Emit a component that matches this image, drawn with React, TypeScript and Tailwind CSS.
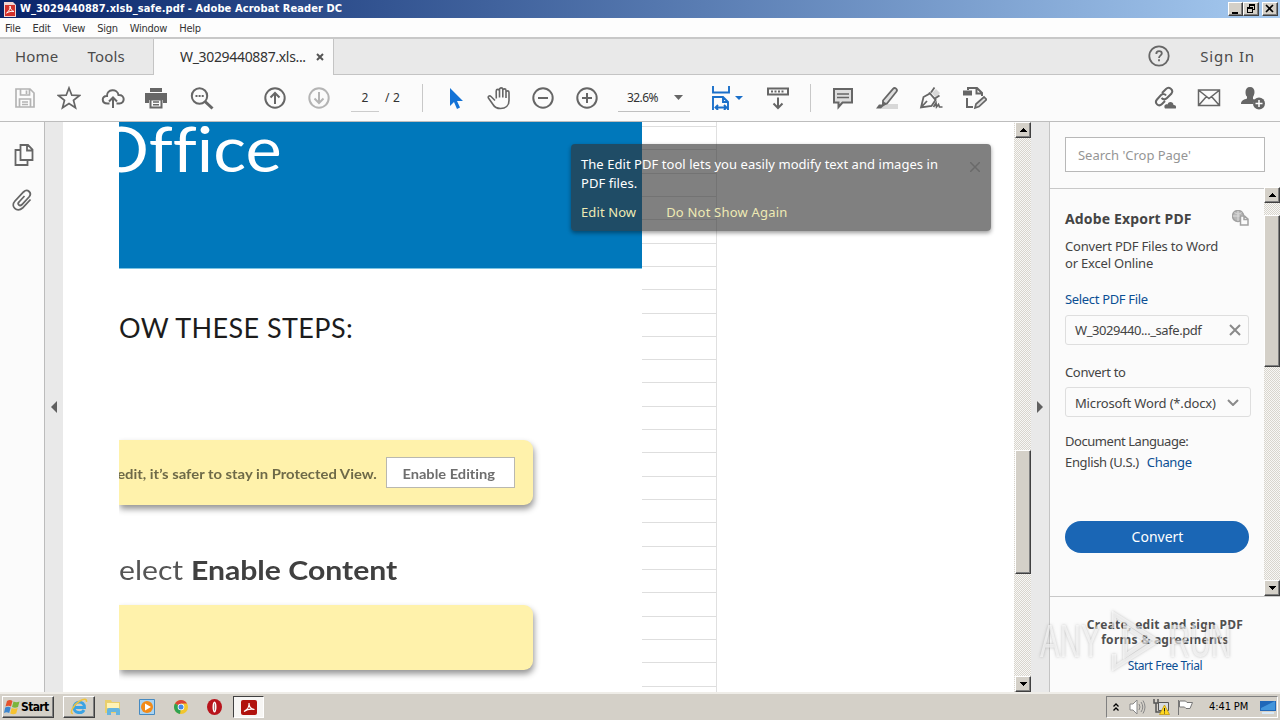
import React from 'react';

const Icon = ({ children, size = 24, className = '' }: { children: React.ReactNode; size?: number; className?: string }) => (
    <svg width={size} height={size} viewBox="0 0 24 24" fill="none" stroke="currentColor" strokeWidth="2" className={`shrink-0 ${className}`}>
        {children}
    </svg>
);

const Tool = ({ children, className = 'text-[#666]' }: { children: React.ReactNode; className?: string }) => (
    <button className={`flex h-11 w-11 shrink-0 items-center justify-center ${className}`}>
        <Icon>{children}</Icon>
    </button>
);

const bevel = 'bg-[#d4d0c8] border border-t-white border-l-white border-r-[#404040] border-b-[#404040] shadow-[inset_-1px_-1px_0_#808080]';

const ScrollButton = ({ up = false }: { up?: boolean }) => (
    <div className={`flex h-4 w-4 shrink-0 items-center justify-center ${bevel}`}>
        <svg width="7" height="4" viewBox="0 0 7 4" shapeRendering="crispEdges">
            <path d={up ? 'M3 0h1v1h1v1h1v1h1v1H0V3h1V2h1V1h1z' : 'M0 0h7v1H6v1H5v1H4v1H3V3H2V2H1V1H0z'} fill="#000" />
        </svg>
    </div>
);

const track = 'bg-[#e9e7e3] bg-[repeating-conic-gradient(#d8d5cd_0_25%,#f8f7f5_0_50%)] bg-[length:2px_2px]';

const TitleBar = () => (
    <header className="flex h-[18px] items-center bg-linear-to-r from-[#0a246a] to-[#a6caf0] pl-1 pr-[2px]">
        <svg width="12" height="15" viewBox="0 0 12 15" className="mr-[4px]">
            <path d="M0 0h9l3 3v12H0z" fill="#f3d5d3" />
            <path d="M1 3h10v11H1z" fill="#d3322b" />
            <path d="M2.500 11c3-2 4-5 3.500-7 0 3 2 5 4 5.500-3-.500-5 .2-7.500 1.500z" stroke="#fff" fill="none" />
        </svg>
        <span className="pt-px font-['DejaVu_Sans_Condensed','DejaVu_Sans',sans-serif] text-[11px] font-bold tracking-[0.09px] text-white">
            W_3029440887.xlsb_safe.pdf - Adobe Acrobat Reader DC
        </span>
        <div className="ml-auto flex">
            <div className={`h-[14px] w-[15px] ${bevel}`}>
                <svg width="13" height="12" shapeRendering="crispEdges"><path d="M3 9h6v2H3z" /></svg>
            </div>
            <div className={`mr-[3px] h-[14px] w-4 ${bevel}`}>
                <svg width="13" height="12" shapeRendering="crispEdges" fill="none" stroke="#000"><path d="M5.500 1.500h5v5h-5zM5 2.500h6" /><path d="M3.500 4.500h5v5h-5z" fill="#d4d0c8" /><path d="M3 5.500h6" /></svg>
            </div>
            <div className={`h-[14px] w-4 ${bevel}`}>
                <svg width="13" height="12" fill="none" stroke="#000" strokeWidth="1.600"><path d="M3 2l7 7M10 2L3 9" /></svg>
            </div>
        </div>
    </header>
);

const MenuBar = () => (
    <nav className="flex h-[19px] items-center gap-[12px] bg-[#fdfdfd] pl-[5px] pt-[3px] font-['DejaVu_Sans_Condensed','DejaVu_Sans',sans-serif] text-[11px] tracking-[-0.25px] text-[#333]">
        {['File', 'Edit', 'View', 'Sign', 'Window', 'Help'].map((m) => (
            <span key={m}>{m}</span>
        ))}
    </nav>
);

const TabBar = () => (
    <div className="flex h-[38px] border-t-2 border-[#c8c8c8] bg-[#e9e9e9] text-[15px] text-[#4b4b4b]">
        <div className="flex w-[154px] items-center gap-[29px] border-r border-b border-[#c4c4c4] pl-[15px]">
            <span className="tracking-[0.2px]">Home</span>
            <span className="tracking-[0.2px]">Tools</span>
        </div>
        <div className="flex w-[180px] items-center border-r border-[#c4c4c4] bg-[#fbfbfb] pl-[26px] text-[14px] text-[#333]">
            <span className="w-[127px] pb-0.5 tracking-[-0.33px] whitespace-nowrap">W_3029440887.xls...</span>
            <svg width="8" height="8" viewBox="0 0 8 8" className="ml-[9px]" stroke="#555" strokeWidth="2"><path d="M1 1l6 6M7 1L1 7" /></svg>
        </div>
        <div className="flex flex-1 items-center justify-end border-b border-[#c4c4c4] pr-[25px] pb-px">
            <svg width="22" height="22" viewBox="0 0 22 22" fill="none" stroke="#666" strokeWidth="1.800" className="mr-[30px]">
                <circle cx="11" cy="11" r="9.700" />
                <path d="M8.300 9c0-4 5.500-3.500 5.500-.5C13.800 10.300 11 10.500 11 13M11 14.200v2" />
            </svg>
            <span className="tracking-[0.85px]">Sign In</span>
        </div>
    </div>
);

const ToolBar = () => (
    <div className="flex h-[47px] items-center border-b border-[#bdbdbd] bg-[#fbfbfb] pl-[3px] text-[12px] text-[#333]">
        <Tool className="text-[#b4b4b4]">
            <path d="M3 3h14l4 4v14H3zM7.500 3v6h9V3M13.500 4.500V8M6.500 21v-8h11v8M9 16h6M9 18.500h6" strokeWidth="1.700" />
        </Tool>
        <Tool><path d="M12 2l2.800 7.200 7.700.3-6 4.800 2 7.500L12 17.500 5.500 21.800l2-7.500-6-4.800 7.700-.3z" strokeWidth="1.700" /></Tool>
        <Tool><path d="M8.500 17.500H6.500C0 17.500 .5 9.500 6 10c-.5-7 10.500-8 11.500-1 7-.5 6.500 8.500 1 8.500H15.500M12 22V11.500M8 15.500l4-4 4 4" /></Tool>
        <button className="-ml-px mr-0.5 flex h-11 w-11 items-center justify-center text-[#666]">
            <Icon>
                <path d="M6 2h12v4H6zM1 7h22v10h-4v-3H5v3H1z" fill="currentColor" stroke="none" />
                <path d="M6.500 13.500h11v8h-11z" fill="#fbfbfb" />
                <path d="M9 16h6M9 18.800h6" strokeWidth="1.400" />
            </Icon>
        </button>
        <Tool>
            <circle cx="9.500" cy="10" r="7.700" /><path d="M15 15.500l7.500 7" strokeWidth="3" /><path d="M5.500 10h2M8.600 10h2M11.700 10h2" />
        </Tool>
        <div className="ml-[29px] flex">
            <Tool><circle cx="12" cy="12" r="9.700" /><path d="M12 18V7M7.500 11.500L12 7l4.500 4.500" /></Tool>
            <Tool className="text-[#b4b4b4]"><circle cx="12" cy="12" r="9.700" /><path d="M12 6v11M7.500 12.500L12 17l4.500-4.500" /></Tool>
        </div>
        <div className="ml-[10px] flex h-[27px] w-7 items-center justify-center border-b border-[#ccc]">2</div>
        <span className="ml-[6px] w-[18px] tracking-[0.2px] whitespace-nowrap">/ 2</span>
        <div className="ml-[19px] mr-[10px] h-7 w-px bg-[#c8c8c8]" />
        <Tool className="text-[#1473d6]"><path d="M7 2v18l4-4 3 7 3-1.400-3-6.600h6z" fill="currentColor" stroke="none" /></Tool>
        <Tool>
            <path d="M8 14.500L4 10.500c-1.500-1.500-3.500 0-2.400 1.700L6 18.500c2 3.500 4 4 7.500 4 5 0 8.500-3 8.500-8V6.500c0-2.200-3-2.200-3 0V12M19 8V4.500c0-2.200-3.200-2.200-3.200 0V11.500M15.800 5V3.500c0-2.200-3.300-2.200-3.300 0V11.500M12.500 5c0-2.200-3.300-2.200-3.300 0L9.300 12.500" strokeWidth="1.600" />
        </Tool>
        <Tool><circle cx="12" cy="12" r="9.700" /><path d="M7 12h10" /></Tool>
        <Tool><circle cx="12" cy="12" r="9.700" /><path d="M7 12h10M12 7v10" /></Tool>
        <div className="ml-[9px] flex h-[27px] w-[72px] items-center justify-between border-b border-[#c0c0c0] pl-[9px] pr-[7px]">
            <span className="tracking-[-0.6px]">32.6%</span>
            <svg width="9" height="5"><path d="M0 0h9L4.500 5z" fill="#666" /></svg>
        </div>
        <button className="ml-[20px] flex items-center text-[#1a6fc9]">
            <Icon size={24}>
                <path d="M3 0v6.500h16V0M3 24V11h10l5 5v8M13 11v5h5M5.500 21.500h11M8 19l-2.500 2.500L8 24M14 19l2.500 2.500L14 24" strokeWidth="1.900" />
            </Icon>
            <svg width="8" height="4" className="ml-px"><path d="M0 0h8L4 4z" fill="#1a6fc9" /></svg>
        </button>
        <button className="ml-[23px] text-[#666]">
            <Icon><path d="M2 2.500h20v6H2zM12 11.500v10M7.500 17.500l4.500 4.500 4.500-4.500" /><path d="M5 5.500h14" strokeDasharray="2 1.500" /></Icon>
        </button>
        <div className="ml-[20px] mr-[10px] h-7 w-px bg-[#c8c8c8]" />
        <Tool><path d="M3 3h18v13.500h-9.500L7.500 21v-4.500H3z" fill="#dedede" /><path d="M6 8h12M6 11.500h12" strokeWidth="1.300" /></Tool>
        <Tool>
            <path d="M8 18h15v5H6z" fill="#d8d8d8" stroke="none" />
            <path d="M8 14.500L18 2.800c2-2 5 .7 3.500 2.700L12 17.500l-4 .8z" fill="#dedede" strokeWidth="1.800" />
            <path d="M1 22.500l3-4h3l1-3.500 4 3-4 2.500-2 2z" fill="currentColor" stroke="none" />
        </Tool>
        <Tool>
            <path d="M13 7l4-4 4 4-4 5z" fill="#d8d8d8" stroke="none" />
            <path d="M2 21.500l2.500-10.500L11 7.500l5.500 6.500L12.500 20zM2 21.500l6-6.500M10 6.500l7 7.500M12 6.500l3.500-5M16 12.500l4.500-3" strokeWidth="1.800" />
            <path d="M14.500 21l2.500-4 .5 4 2-2.500 1 2.500h3" strokeWidth="1.700" />
        </Tool>
        <Tool>
            <path d="M0 4.500h9v5H0z" fill="currentColor" stroke="none" />
            <path d="M5 4V2h9l5 5v3M13.500 2.500v5H19M4 12v9h6" />
            <path d="M12 22l1-4 8-7 2.500 2.500-7.500 7z" fill="#dedede" strokeWidth="1.700" />
        </Tool>
        <div className="ml-auto mr-[5px] flex">
            <Tool>
                <path d="M9 7l4-4c3-3 8 1 5.500 4.500L14 12c-2 2-4 1.500-5.500 0M12 15l-3 3c-3.500 3.500-8-1-5-4.500L8 9c2-1.500 4-1 5 .5" />
                <path d="M12 22.500c-2-3.500 1.500-5 2.500-4 1-4 6-3 6 .5 3-.5 3 3.500 2 3.500z" fill="currentColor" stroke="none" />
            </Tool>
            <Tool><path d="M1.500 4h21v15.500h-21zM2 4.500l10 8 10-8M2 19l7.500-8.500M22 19l-7.500-8.500" strokeWidth="1.500" /></Tool>
            <Tool>
                <path d="M9 1c3 0 4.500 2 4.500 5 0 2.500-1 4-1.500 5v2l3 1.500c-2.500 1-3 2.500-3 3.500H0c0-3.500 3-4.500 6-5.500v-2C5 10 4.500 8.500 4.500 6 4.500 3 6 1 9 1z" fill="currentColor" stroke="none" />
                <circle cx="18" cy="17.500" r="6" fill="currentColor" stroke="none" />
                <path d="M18 14v7M14.500 17.500h7" stroke="#fff" strokeWidth="1.500" />
            </Tool>
        </div>
    </div>
);

const LeftRail = () => (
    <>
        <aside className="flex w-[45px] flex-col items-center border-r border-[#bcbcbc] bg-[#fbfbfb] pt-[21px] text-[#666]">
            <Icon className="ml-[3px]">
                <path d="M8.500 2h7.500l4.500 4.500V17h-12zM15 2.500V7.500h5M8 7H3.500v15H15.500v-4.500" strokeWidth="1.800" />
            </Icon>
            <Icon className="mt-[21px] mr-px">
                <path d="M20.500 11.500l-8 8.500c-5.500 5-12.500-1.500-7.500-7l8.500-9c4-4 9 1 5.500 5L12 16.500c-2.500 2.500-5-.500-3-2.500L14.500 8" strokeWidth="1.800" />
            </Icon>
        </aside>
        <div className="flex w-[18px] items-center justify-center bg-[#e9e9e9]">
            <svg width="6" height="12"><path d="M6 0v12L0 6z" fill="#606060" /></svg>
        </div>
    </>
);

const DocumentView = () => (
    <main className="relative flex w-[951px] overflow-hidden bg-white pl-[56px]">
        <div className="flex w-[523px] flex-col overflow-hidden font-['Lato',sans-serif] [font-variant-ligatures:none]">
            <div className="h-[147px] shrink-0 border-b border-[#7cc4e2] bg-[#0078bb]">
                <div className="-ml-[25px] -mt-[13px] w-[190px] origin-left scale-x-[1.125] text-[61px] leading-[80px] text-white">Office</div>
            </div>
            <div className="mt-[40px] h-[38px] text-[27px] leading-[38px] tracking-[0.4px] whitespace-nowrap text-[#1c1c1c]">OW THESE STEPS:</div>
            <div className="mt-[93px] flex h-[65px] w-[414px] shrink-0 items-center justify-end rounded-r-[9px] bg-[#fff2ab] pr-[18px] shadow-[1px_4px_6px_rgba(0,0,0,0.42)]">
                <span className="mr-[9px] origin-right scale-x-[1.125] pt-[4px] text-[13.2px] font-bold whitespace-nowrap text-[#6e6a48]">edit, it’s safer to stay in Protected View.</span>
                <span className="flex h-[31px] w-[129px] shrink-0 items-center justify-center border border-[#b9b8b0] bg-white pt-[4px] text-[13.2px] font-bold text-[#6e6e6e]">
                    <span className="mr-1 scale-x-[1.11]">Enable Editing</span>
                </span>
            </div>
            <div className="mt-[45px] h-[40px] w-[270px] origin-left scale-x-[1.117] text-[27px] leading-[40px] whitespace-nowrap text-[#555]">
                elect <b className="text-[#404040]">Enable Content</b>
            </div>
            <div className="mt-[15px] h-[65px] w-[414px] shrink-0 rounded-r-[9px] bg-[#fff2ab] shadow-[1px_4px_6px_rgba(0,0,0,0.42)]" />
        </div>
        {/* empty sheet rows right of the picture */}
        <div className="w-[75px] border-r border-[#e0e0e0]">
            <div className="h-[5px] border-b border-[#dedede]" />
            {Array.from({ length: 24 }, (_, i) => (
                <div key={i} className="h-[23.32px] border-b border-[#dedede]" />
            ))}
        </div>

        <div className="absolute left-[508px] top-[22px] h-[87px] w-[420px] rounded bg-[#323232]/62 px-[10px] pt-[11px] text-[13px] leading-[19px] text-white shadow-[0_2px_4px_rgba(0,0,0,0.4)]">
            <p className="w-[375px] tracking-[0.05px] whitespace-nowrap">The Edit PDF tool lets you easily modify text and images in<br />PDF files.</p>
            <div className="mt-[10px] flex gap-[30px] text-[#eeeab4]">
                <span className="tracking-[0.1px]">Edit Now</span>
                <span className="tracking-[0.2px]">Do Not Show Again</span>
            </div>
            <svg width="10" height="10" className="absolute right-[11px] top-[18px]" stroke="#6a6a6a" strokeWidth="1.500"><path d="M0 0l10 10M10 0L0 10" /></svg>
        </div>
    </main>
);

const RightPanel = () => (
    <aside className="flex flex-1 flex-col border-l border-[#c4c4c4] bg-[#fbfbfb] text-[13px] text-[#444]">
        <div className="h-[67px] shrink-0 border-b border-[#c8c8c8] pl-[15px] pt-[15px]">
            <div className="flex h-[35px] w-[200px] items-center border border-[#b8b8b8] bg-white pl-3 pt-[2px] tracking-[-0.02px] text-[#959595]">Search 'Crop Page'</div>
        </div>
        <div className="flex h-[407px] shrink-0">
            <div className="flex w-[214px] flex-col pl-[15px]">
                <div className="mt-[19px] flex h-5 items-center justify-between pr-[15px] text-[14px] font-bold">
                    <span className="tracking-[0.15px] whitespace-nowrap">Adobe Export PDF</span>
                    <svg width="17" height="16" viewBox="0 0 17 16" fill="none" stroke="#a2a2a2" strokeWidth="1.500">
                        <circle cx="6" cy="6" r="5.500" fill="#b8b8b8" /><path d="M1 6h10M6 1v10M2.500 2.500c3 2 5 2 7 0" stroke="#ddd" strokeWidth="1" />
                        <path d="M8.500 6h4l3.500 3v6H8.500zM12 6v3.500h4" fill="#fbfbfb" />
                    </svg>
                </div>
                <p className="mt-[10px] leading-[17px] tracking-[-0.2px] whitespace-nowrap">Convert PDF Files to Word<br />or Excel Online</p>
                <a className="mt-[19px] leading-[17px] tracking-[-0.33px] text-[#0b4f94]">Select PDF File</a>
                <div className="mt-[7px] flex h-[30px] w-[184px] items-center justify-between rounded-[3px] border border-[#dedede] pl-[9px] pr-[7px]">
                    <span className="pt-px tracking-[-0.43px] whitespace-nowrap">W_3029440..._safe.pdf</span>
                    <svg width="12" height="12" stroke="#8a8a8a" strokeWidth="2"><path d="M1 1l10 10M11 1L1 11" /></svg>
                </div>
                <span className="mt-[19px] leading-[17px] tracking-[-0.35px]">Convert to</span>
                <div className="mt-[6px] flex h-[30px] w-[186px] items-center justify-between rounded-[3px] border border-[#dedede] pl-[9px] pr-[11px]">
                    <span className="pt-[3px] tracking-[-0.17px] whitespace-nowrap">Microsoft Word (*.docx)</span>
                    <svg width="12" height="7" fill="none" stroke="#8a8a8a" strokeWidth="2"><path d="M1 1l5 5 5-5" /></svg>
                </div>
                <span className="mt-[16px] leading-[17px] tracking-[-0.45px]">Document Language:</span>
                <div className="mt-[4px] flex gap-[8px] leading-[17px] tracking-[-0.35px]">
                    <span>English (U.S.)</span>
                    <a className="text-[#0b4f94]">Change</a>
                </div>
                <button className="mt-[50px] flex h-8 w-[184px] items-center justify-center rounded-full bg-[#1a66b5] pl-px pb-px text-[14px] text-white">Convert</button>
            </div>
            <div className={`-mt-[2px] flex w-4 flex-col ${track}`}>
                <ScrollButton up />
                <div className={`mt-[12px] h-[152px] ${bevel}`} />
                <div className="flex-1" />
                <ScrollButton />
            </div>
        </div>
        <div className="flex flex-1 flex-col items-center border-t border-[#c8c8c8] pt-[20px] text-[12px]">
            <p className="text-center leading-[15px] font-bold tracking-[0.28px] text-[#505050]">Create, edit and sign PDF<br />forms &amp; agreements</p>
            <a className="mt-[10px] leading-[17px] tracking-[-0.45px] text-[#0b4f94]">Start Free Trial</a>
        </div>
    </aside>
);

const Watermark = () => (
    <div className="absolute left-[1040px] top-[609px] flex h-[64px] w-[196px] items-center font-['Liberation_Sans',sans-serif] text-[46px] leading-none text-white/60 [filter:drop-shadow(0_0_1.5px_rgba(70,70,70,0.5))]">
        <span className="w-[70px] shrink-0 origin-left scale-x-[0.64]">ANY</span>
        <svg width="50" height="62" viewBox="0 0 50 62" fill="none" stroke="currentColor" strokeWidth="4" className="shrink-0">
            <path d="M4 18V4l43 27L4 58V44M15 16v30l22-15z" />
        </svg>
        <span className="ml-[9px] w-[64px] shrink-0 origin-left scale-x-[0.63]">RUN</span>
    </div>
);

const Taskbar = () => (
    <footer className="flex h-[28px] items-center border-t-2 border-[#efede8] bg-[#d4d0c8] pl-[2px] pr-[2px] font-['DejaVu_Sans_Condensed','DejaVu_Sans',sans-serif] text-[11px] text-black">
        <button className={`flex h-[22px] w-[52px] items-center pl-px ${bevel}`}>
            <svg width="16" height="16" viewBox="0 0 16 16" className="shrink-0">
                <path d="M3 2q3-2 5.500 0L7 7.500Q4.500 6 1.500 7.500z" fill="#e5532d" />
                <path d="M9.500 2.500q3 1.500 6 0L14 8q-3 1.500-6 0z" fill="#7bb53b" />
                <path d="M1.200 8.500q3-1.500 5.500 0L5.200 14Q2.500 12.500 0 14z" fill="#3d86cf" />
                <path d="M7.700 9q3 1.500 6 0l-1.500 5.500q-3 1.500-6 0z" fill="#f6c22f" />
            </svg>
            <span className="ml-px text-[12px] font-bold tracking-[-0.65px]">Start</span>
        </button>
        <button className={`ml-[9px] flex h-[22px] w-[32px] items-center justify-center ${bevel}`}>
            <svg width="18" height="18" viewBox="0 0 18 18" fill="none">
                <path d="M4 9.500h10.500C14.500 2 4 2.500 4 9.500c0 6 8 6.500 10 2.500" stroke="#3ba3e4" strokeWidth="2.800" />
                <path d="M3 15.500C-1 16 3 7 9 3.500c5-3 8-3 7.500.5" stroke="#efc33f" strokeWidth="1.500" />
            </svg>
        </button>
        <svg width="18" height="18" viewBox="0 0 18 18" className="ml-[9px]">
            <path d="M1 2h6l1 2h8v11H1z" fill="#e9cf6c" /><path d="M3 5h12v5H3z" fill="#fff3b5" /><path d="M3 17v-5q0-2 2-2h9q2 0 2 2v5h-4v-3H7v3z" fill="#65b5df" />
        </svg>
        <svg width="18" height="18" viewBox="0 0 18 18" className="ml-[16px]">
            <path d="M1.500 1.500h15v15h-15z" fill="#a9d3f2" stroke="#468ac1" /><circle cx="9" cy="9" r="6" fill="#f28a18" /><path d="M7 5.500l6 3.500-6 3.500z" fill="#fff" />
        </svg>
        <svg width="14" height="14" viewBox="0 0 14 14" className="ml-[18px]">
            <circle cx="7" cy="7" r="7" fill="#f2c62d" />
            <path d="M7 7L1 3.500A7 7 0 0113 3.500H7z" fill="#dc4437" />
            <path d="M7 7l-1 7A7 7 0 011 3.500z" fill="#2fa252" />
            <circle cx="7" cy="7" r="3.300" fill="#fff" /><circle cx="7" cy="7" r="2.500" fill="#4488e6" />
        </svg>
        <svg width="15" height="16" viewBox="0 0 15 16" className="ml-[19px]">
            <ellipse cx="7.500" cy="8" rx="7.500" ry="8" fill="#b8141c" /><ellipse cx="7.500" cy="8" rx="2" ry="5.500" fill="#fff" /><ellipse cx="7.500" cy="8" rx=".6" ry="4" fill="#b08080" />
        </svg>
        <button className="ml-[11px] flex h-[22px] w-[31px] items-center justify-center border border-t-[#404040] border-l-[#404040] border-r-white border-b-white bg-[#f7f6f4]">
            <svg width="16" height="15" viewBox="0 0 16 15">
                <rect width="16" height="15" rx="2" fill="#b1120d" /><path d="M3 11.500c3-1.500 5.500-5 5-8.500-.2 3.500 2 6 5.500 6.500C10 8.800 6 9.500 3 11.500z" fill="none" stroke="#fff" strokeWidth="1.200" />
            </svg>
        </button>
        <div className="ml-auto flex h-[22px] w-[172px] items-center border border-t-[#808080] border-l-[#808080] border-r-white border-b-white pl-[6px]">
            <svg width="6" height="8" className="shrink-0" fill="none" stroke="#000" strokeWidth="1.300"><path d="M.5 3.500L3 1l2.500 2.500M.5 7.500L3 5l2.500 2.500" /></svg>
            <svg width="17" height="16" viewBox="0 0 17 16" className="ml-[10px] shrink-0" fill="none" stroke="#888">
                <path d="M1 5h3l4-4v14l-4-4H1z" fill="#fff" /><path d="M10 5q2 3 0 6M12 3q3.500 5 0 10M14 1.500q4 6.500 0 13" />
            </svg>
            <svg width="17" height="16" viewBox="0 0 17 16" className="ml-[7px] shrink-0" fill="none" stroke="#555">
                <path d="M5.500 3.500h10v8h-10z" fill="#d7dbdf" /><path d="M1 0v4h4V0M3 4v9h5" strokeWidth="1.500" />
                <path d="M11.500 6l5 9.500h-10z" fill="#ffd820" stroke="#bb9000" strokeWidth=".7" /><path d="M11.500 9v3.500M11.500 13.500v1" stroke="#222" />
            </svg>
            <svg width="17" height="16" viewBox="0 0 17 16" className="ml-[7px] shrink-0" fill="none" stroke="#777">
                <path d="M1.500 1v15M2.500 2h6l1.500 1.500h5.500l-2.500 6H9L7.500 8h-5z" fill="#fff" />
            </svg>
            <span className="ml-[15px] w-[40px] shrink-0 pt-px tracking-[-0.1px] whitespace-nowrap">4:41 PM</span>
            <svg width="16" height="14" viewBox="0 0 16 14" className="ml-[11px] shrink-0"><path d="M0 1h16v10H0z" fill="#2067b8" /><path d="M1 8L15 1v9H1z" fill="#4295db" /><path d="M2 12h12v2H2z" fill="#d8e9f7" /></svg>
        </div>
    </footer>
);

const App = () => (
    <div className="relative flex h-[720px] w-[1280px] flex-col overflow-hidden bg-white font-['Noto_Sans',sans-serif]">
        <TitleBar />
        <MenuBar />
        <TabBar />
        <ToolBar />
        <div className="flex h-[570px] shrink-0">
            <LeftRail />
            <DocumentView />
            <div className={`flex w-[17px] flex-col items-end ${track}`}>
                <ScrollButton up />
                <div className={`mt-[312px] h-[124px] w-4 ${bevel}`} />
                <div className="flex-1" />
                <ScrollButton />
            </div>
            <div className="flex w-[18px] items-center justify-center bg-[#e9e9e9]">
                <svg width="6" height="12"><path d="M0 0v12l6-6z" fill="#606060" /></svg>
            </div>
            <RightPanel />
        </div>
        <Taskbar />
        <Watermark />
    </div>
);

export default App;
